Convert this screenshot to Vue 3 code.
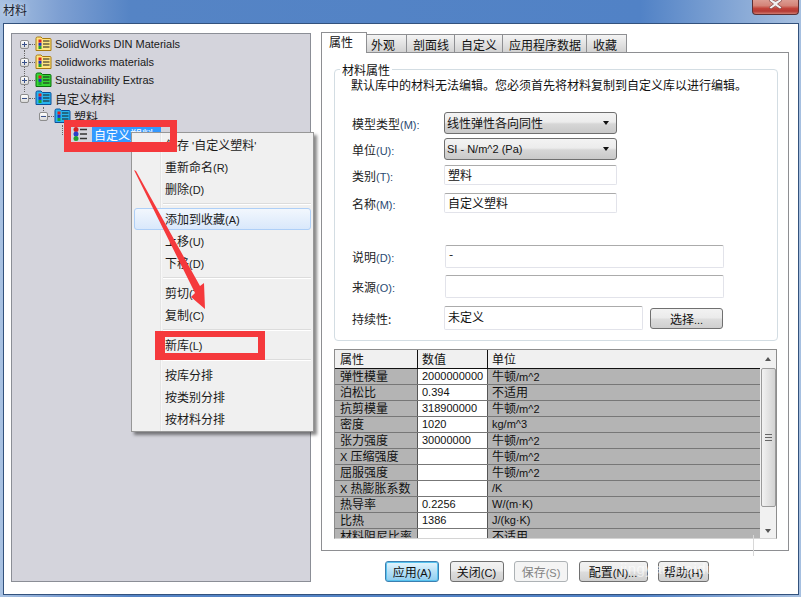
<script setup>
import { h } from 'vue'

const T = (props) =>
  (props.s.match(/[\u3000-\u9fff]+|[^\u3000-\u9fff]+/g) || []).map((p) =>
    /[\u3000-\u9fff]/.test(p) ? h('span', { class: 'cjk' }, p) : h('span', { class: 'lat' }, p),
  )
T.props = ['s']

const tree = [
  { label: 'SolidWorks DIN Materials', color: 'y', exp: '+' },
  { label: 'solidworks materials', color: 'y', exp: '+' },
  { label: 'Sustainability Extras', color: 'g', exp: '+' },
  { label: '自定义材料', color: 'b', exp: '-', big: true },
  { label: '塑料', color: 'b', exp: '-', big: true, lvl: 1 },
]
const folderColors = {
  y: ['#ffe680', '#a87a10'],
  g: ['#35d835', '#0b6f0b'],
  b: ['#27b4ee', '#0c4f9a'],
}
const menu = [
  ['保存 \'自定义塑料\''], ['重新命名(R)'], ['删除(D)'], null,
  ['添加到收藏(A)', true], ['上移(U)'], ['下移(D)'], null,
  ['剪切(T)'], ['复制(C)'], null,
  ['新库(L)'], null,
  ['按库分排'], ['按类别分排'], ['按材料分排'],
]
const tabs = ['外观', '剖面线', '自定义', '应用程序数据', '收藏']
const tabWidths = [40, 48, 48, 84, 40]
const rows = [
  ['弹性模量', '2000000000', '牛顿/m^2'],
  ['泊松比', '0.394', '不适用'],
  ['抗剪模量', '318900000', '牛顿/m^2'],
  ['密度', '1020', 'kg/m^3'],
  ['张力强度', '30000000', '牛顿/m^2'],
  ['X 压缩强度', '', '牛顿/m^2'],
  ['屈服强度', '', '牛顿/m^2'],
  ['X 热膨胀系数', '', '/K'],
  ['热导率', '0.2256', 'W/(m·K)'],
  ['比热', '1386', 'J/(kg·K)'],
  ['材料阻尼比率', '', '不适用'],
]
const buttons = [
  { t: '应用(A)', w: 54, cls: 'primary' },
  { t: '关闭(C)', w: 54 },
  { t: '保存(S)', w: 54, cls: 'disabled' },
  { t: '配置(N)...', w: 69 },
  { t: '帮助(H)', w: 51 },
]
</script>

<template>
  <div class="window">
    <header class="titlebar">
      <span class="title">材料</span>
      <span class="close"><svg width="15" height="9" viewBox="0 0 15 9"><path d="M3 -1 L7.500 1.500 L12 -1 L14 .5 L9.500 4 L14 7.500 L12 9 L7.500 6 L3 9 L1 7.500 L5.500 4 L1 .5Z" fill="#f2f2f2" stroke="#6d2a2a" stroke-width=".6"/></svg></span>
    </header>
    <div class="client">
      <aside class="tree">
        <div v-for="(n, i) in tree" :key="i" class="node" :class="{ lvl1: n.lvl }">
          <span class="exp"><i class="h"></i><i v-if="n.exp === '+'" class="v"></i></span>
          <span class="dots"></span>
          <svg class="fold" width="17" height="16" viewBox="0 0 17 16">
            <path d="M1 14.5 V2.5 Q1 1 2.5 1 H6 L7.5 2.5 H15 Q16 2.500 16 3.500 V14.500Z" :fill="folderColors[n.color][0]" :stroke="folderColors[n.color][1]"/>
            <rect x="3.500" y="3.500" width="3" height="3" fill="#e02020"/>
            <rect x="3.500" y="6.800" width="3" height="3" fill="#2030c0"/>
            <rect x="3.500" y="10" width="3" height="3" fill="#20a030"/>
            <path d="M8 5 H14.500 M8 8 H14.500 M8 11 H14.500" stroke="#1c1c1c" stroke-width="1.200"/>
          </svg>
          <span class="node-label" :class="{ big: n.big }">{{ n.label }}</span>
        </div>
        <div class="node leaf">
          <svg class="fold" width="16" height="16" viewBox="0 0 16 16">
            <circle cx="4" cy="3.500" r="2.500" fill="#d42020"/>
            <circle cx="4" cy="8" r="2.500" fill="#2a3fc8"/>
            <circle cx="4" cy="12.500" r="2.500" fill="#20a030"/>
            <path d="M8 3.500 H15 M8 8 H15 M8 12.500 H15" stroke="#333" stroke-width="1.600"/>
          </svg>
          <span class="selected">自定义塑料</span>
        </div>
        <i class="vline v1"></i>
        <i class="vline v2"></i>
        <i class="vline v3"></i>
      </aside>

      <section class="right">
        <div class="tabs">
          <div class="tab active">属性</div>
          <div v-for="(t, i) in tabs" :key="t" class="tab" :style="{ width: tabWidths[i] + 'px' }">{{ t }}</div>
        </div>
        <div class="panel">
          <fieldset class="group">
            <legend>材料属性</legend>
            <p class="note">默认库中的材料无法编辑。您必须首先将材料复制到自定义库以进行编辑。</p>
            <div class="row r-model"><label>模型类型<u class="k">(M):</u></label><div class="select">线性弹性各向同性<b></b></div></div>
            <div class="row r-unit"><label>单位<u class="k">(U):</u></label><div class="select latin">SI - N/m^2 (Pa)<b></b></div></div>
            <div class="row r-cat"><label>类别<u class="k">(T):</u></label><div class="input">塑料</div></div>
            <div class="row r-name"><label>名称<u class="k">(M):</u></label><div class="input">自定义塑料</div></div>
            <div class="row r-desc"><label>说明<u class="k">(D):</u></label><div class="input wide">-</div></div>
            <div class="row r-src"><label>来源<u class="k">(O):</u></label><div class="input wide"></div></div>
            <div class="row r-dur"><label>持续性:</label><div class="input dur">未定义</div><div class="btn pick"><T s="选择..." /></div></div>
          </fieldset>
          <div class="table">
            <div class="grid">
              <div class="thead">
                <span class="c1">属性</span><span class="c2">数值</span><span class="c3">单位</span>
              </div>
              <div v-for="r in rows" :key="r[0]" class="trow">
                <span class="c1"><T :s="r[0]" /></span><span class="c2 val">{{ r[1] }}</span><span class="c3"><T :s="r[2]" /></span>
              </div>
            </div>
            <div class="scroll">
              <span class="arrow up"></span>
              <div class="thumb"><i></i><i></i><i></i></div>
              <span class="arrow down"></span>
            </div>
          </div>
        </div>
        <div class="actions">
          <div v-for="b in buttons" :key="b.t" class="btn" :class="b.cls" :style="{ width: b.w + 'px' }"><T :s="b.t" /></div>
        </div>
      </section>
    </div>

    <div class="menu">
      <template v-for="(m, i) in menu" :key="i">
        <div v-if="!m" class="sep"></div>
        <div v-else class="mi" :class="{ hot: m[1] }"><T :s="m[0]" /></div>
      </template>
    </div>

    <i class="mark m1"></i>
    <i class="mark m2"></i>
    <svg class="arrow-note" width="801" height="597" viewBox="0 0 801 597">
      <polygon points="134,170 136,171 200,286 204,283 205,309 191,297 195,293" fill="#f5393c"/>
    </svg>
    <span class="watermark">jingyan.baidu</span>
    <i class="hair"></i>
  </div>
</template>

<style>
html, body { margin: 0; padding: 0; background: #fff; }
.lat { font-family: "Liberation Sans", sans-serif; font-size: 11px; }
.cjk { font-family: "Noto Sans CJK SC", sans-serif; font-size: 12px; }
</style>

<style scoped>
.window {
  position: relative;
  width: 801px;
  height: 597px;
  overflow: hidden;
  display: flex;
  flex-direction: column;
  font-family: "Liberation Sans", "Noto Sans CJK SC", sans-serif;
  font-size: 12px;
  color: #111;
  background: linear-gradient(90deg, #a9c2e2 0, #7d9fd2 60px, #5584c5 130px, #5182c6 640px, #88a9d6 740px, #a7c0e0 801px);
}
.titlebar {
  height: 23px;
  flex: none;
  display: flex;
  justify-content: space-between;
  align-items: flex-start;
  padding-left: 3px;
}
.title { font-family: "Noto Sans CJK SC", sans-serif; font-size: 12px; line-height: 20px; color: #1c2430; text-shadow: 0 0 5px #dfe9f5; }
.close {
  margin-right: 2px;
  width: 47px;
  height: 15px;
  box-sizing: border-box;
  border: 1px solid #5c3034;
  border-top: 0;
  border-radius: 0 0 4px 4px;
  background: linear-gradient(#dc9c92, #d48478 40%, #c2443a 60%, #b43a35 80%, #d07b70);
  display: flex;
  align-items: flex-start;
  justify-content: center;
}
.client {
  flex: 1;
  margin: 0 2px 2px 3px;
  background: #fff;
  border: 1px solid #33527d;
  display: flex;
  align-items: flex-start;
  padding: 9px 0 0 7px;
  min-height: 0;
}
.tree {
  position: relative;
  flex: none;
  width: 300px;
  height: 549px;
  box-sizing: border-box;
  background: #d4d4dc;
  border: 1px solid #8b8e96;
  padding-top: 1px;
}
.node { display: flex; align-items: center; height: 18px; padding-left: 8px; white-space: nowrap; }
.node.lvl1 { padding-left: 27px; }
.node.leaf { padding-left: 60px; }
.exp {
  position: relative;
  z-index: 1;
  flex: none;
  box-sizing: border-box;
  width: 9px;
  height: 9px;
  border: 1px solid #8d8d8d;
  border-radius: 2px;
  background: linear-gradient(#fff, #d8d8d8);
}
.exp .h { position: absolute; left: 1px; top: 3px; width: 5px; height: 1px; background: #39518a; }
.exp .v { position: absolute; left: 3px; top: 1px; width: 1px; height: 5px; background: #39518a; }
.dots { flex: none; width: 6px; border-top: 1px dotted #666; }
.fold { flex: none; margin-right: 3px; }
.node-label { font-family: "Liberation Sans", "Noto Sans CJK SC", sans-serif; font-size: 11px; color: #1a1a1a; }
.node-label.big { font-size: 12px; font-family: "Noto Sans CJK SC", sans-serif; }
.selected {
  background: #3399ff;
  color: #fff;
  font-family: "Noto Sans CJK SC", sans-serif;
  height: 15px;
  line-height: 15px;
  padding: 0 7px 0 2px;
  margin-left: 1px;
}
.vline { position: absolute; width: 0; border-left: 1px dotted #666; }
.v1 { left: 12px; top: 16px; height: 42px; }
.v2 { left: 31px; top: 73px; height: 6px; }
.v3 { left: 50px; top: 91px; height: 10px; }

.right { flex: none; width: 468px; margin-left: 10px; margin-top: -1px; }
.tabs { display: flex; align-items: flex-end; height: 20px; position: relative; z-index: 1; }
.tab {
  box-sizing: border-box;
  height: 18px;
  border: 1px solid #8e8f92;
  border-bottom: 0;
  border-left: 0;
  background: linear-gradient(#f4f4f4, #d2d2d2);
  padding-left: 6px;
  line-height: 19px;
  white-space: nowrap;
  font-family: "Noto Sans CJK SC", sans-serif;
}
.tab:nth-child(2) { padding-left: 4px; }
.tab.active {
  width: 46px;
  height: 21px;
  background: #fff;
  border-left: 1px solid #8e8f92;
  padding-left: 7px;
  line-height: 18px;
  margin-bottom: -1px;
}
.panel {
  box-sizing: border-box;
  height: 499px;
  border: 1px solid #8e8f92;
  padding: 10px 11px 0 12px;
}
.group {
  box-sizing: border-box;
  margin: 0;
  width: 444px;
  height: 278px;
  padding: 0 0 0 17px;
  border: 1px solid #d3dde3;
  border-radius: 4px;
  min-width: 0;
}
legend { padding: 0 2px; margin-left: -12px; line-height: 13px; font-family: "Noto Sans CJK SC", sans-serif; }
.note { margin: 1px 0 0 -1px; line-height: 16px; white-space: nowrap; font-family: "Noto Sans CJK SC", sans-serif; }
.row { display: flex; align-items: center; }
.row label { flex: none; width: 92px; font-family: "Noto Sans CJK SC", sans-serif; color: #222; }
.k { text-decoration: none; font-family: "Liberation Sans", sans-serif; font-size: 11px; color: #2a4a72; }
.r-model { margin-top: 19px; height: 22px; }
.r-unit { margin-top: 4px; height: 22px; }
.r-cat { margin-top: 5px; height: 20px; }
.r-name { margin-top: 8px; height: 20px; }
.r-desc { margin-top: 32px; height: 23px; }
.r-src { margin-top: 7px; height: 23px; }
.r-dur { margin-top: 8px; height: 24px; }
.select {
  box-sizing: border-box;
  position: relative;
  width: 173px;
  height: 22px;
  border: 1px solid #6f6f6f;
  border-radius: 3px;
  background: linear-gradient(#f3f3f3 0, #ececec 45%, #d6d6d6 55%, #c9c9c9);
  padding-left: 2px;
  line-height: 20px;
  font-family: "Noto Sans CJK SC", sans-serif;
}
.select.latin { font-family: "Liberation Sans", sans-serif; font-size: 11px; }
.select b {
  position: absolute;
  right: 7px;
  top: 8px;
  border: 3.500px solid transparent;
  border-top: 4px solid #111;
  border-bottom: 0;
}
.input {
  box-sizing: border-box;
  width: 173px;
  height: 20px;
  border: 1px solid #e2e3ea;
  border-top-color: #ababab;
  border-radius: 2px;
  background: #fff;
  padding-left: 3px;
  line-height: 18px;
  font-family: "Noto Sans CJK SC", sans-serif;
}
.input.wide { width: 279px; height: 23px; margin-left: 1px; line-height: 16px; }
.input.dur { width: 199px; height: 24px; line-height: 20px; }
.btn {
  box-sizing: border-box;
  height: 21px;
  border: 1px solid #707070;
  border-radius: 3px;
  background: linear-gradient(#f2f2f2, #ebebeb 45%, #dcdcdc 55%, #cfcfcf);
  text-align: center;
  line-height: 19px;
  white-space: nowrap;
}
.btn.pick { width: 73px; margin-left: 7px; }
.btn.primary { border-color: #3c7fb1; background: linear-gradient(#e5f5fd, #b6e0f7 50%, #8fcdf0); box-shadow: inset 0 0 0 1px #58c3ef; }
.btn.disabled { border-color: #adb2b5; background: #f4f4f4; color: #838383; }
.table {
  box-sizing: border-box;
  display: flex;
  margin-top: 8px;
  width: 443px;
  height: 190px;
  border: 1px solid #8d8d8d;
  border-bottom-color: #d4d4d4;
  overflow: hidden;
}
.grid { flex: none; width: 425px; overflow: hidden; }
.thead, .trow { display: grid; grid-template-columns: 83px 70px 1fr; }
.thead { height: 18px; background: #f0f0f0; border-bottom: 1px solid #111; line-height: 17px; font-family: "Noto Sans CJK SC", sans-serif; }
.thead span { border-right: 1px solid #111; padding-left: 4px; }
.thead .c1 { padding-left: 5px; }
.thead .c3 { border-right: 0; }
.trow { height: 16px; box-sizing: border-box; border-bottom: 1px solid #777; background: #b4b4b4; line-height: 14px; white-space: nowrap; }
.trow span { padding-left: 4px; border-right: 1px solid #555; }
.trow span :deep(span) { padding: 0; border: 0; }
.trow .val { background: #fff; font-size: 11px; line-height: 15px; }
.trow .c3 { border-right: 0; }
.trow .c1 { padding-left: 5px; }
.scroll {
  flex: 1;
  position: relative;
  background: #f1f1f1;
  display: flex;
  flex-direction: column;
  align-items: center;
}
.arrow { flex: none; width: 0; height: 0; border: 3.500px solid transparent; margin: 7px 0 7px; }
.arrow.up { border-top: 0; border-bottom: 4px solid #555; }
.arrow.down { border-bottom: 0; border-top: 4px solid #555; position: absolute; bottom: -2px; }
.thumb {
  box-sizing: border-box;
  width: 15px;
  height: 139px;
  border: 1px solid #9a9a9a;
  border-radius: 2px;
  background: linear-gradient(90deg, #f2f2f2, #d2d2d2);
  display: flex;
  flex-direction: column;
  align-items: center;
  justify-content: center;
  gap: 2px;
}
.thumb i { width: 7px; height: 1px; background: #666; }
.actions { display: flex; margin: 10px 0 0 64px; gap: 10.500px; }

.menu {
  position: absolute;
  left: 131px;
  top: 132px;
  width: 183px;
  height: 300px;
  box-sizing: border-box;
  padding: 1px 2px;
  background: linear-gradient(90deg, #f0f0f0 28px, #e4e4e4 28px, #e4e4e4 29px, #fff 29px, #f0f0f0 30px);
  border: 1px solid #979797;
  box-shadow: 3px 3px 3px rgba(40, 40, 40, .55);
}
.mi { box-sizing: border-box; height: 22px; line-height: 21px; padding-left: 31px; color: #1a1a1a; white-space: nowrap; }
.mi.hot { border: 1px solid #aecff7; border-radius: 3px; background: linear-gradient(#f2f7fd, #d9e8fb); line-height: 19px; padding-left: 30px; }
.sep { height: 8px; margin-left: 29px; position: relative; }
.sep::after { content: ""; position: absolute; left: 0; right: 0; top: 3px; height: 2px; background: linear-gradient(#dcdcdc 50%, #fff 50%); }

.mark { position: absolute; box-sizing: border-box; border-style: solid; border-color: #f5393c; }
.m1 { left: 64px; top: 120px; width: 113px; height: 32px; border-width: 7px 7px 10px 7px; }
.m2 { left: 155px; top: 331px; width: 110px; height: 29px; border-width: 6px 7px 7px 10px; }
.arrow-note { position: absolute; left: 0; top: 0; pointer-events: none; }
.watermark { position: absolute; left: 620px; top: 560px; font-size: 15px; color: rgba(255, 255, 255, .6); letter-spacing: .5px; font-family: "Liberation Sans", sans-serif; }
.hair { position: absolute; left: 753px; top: 535px; width: 1px; height: 21px; background: #d8d8d8; }
</style>
